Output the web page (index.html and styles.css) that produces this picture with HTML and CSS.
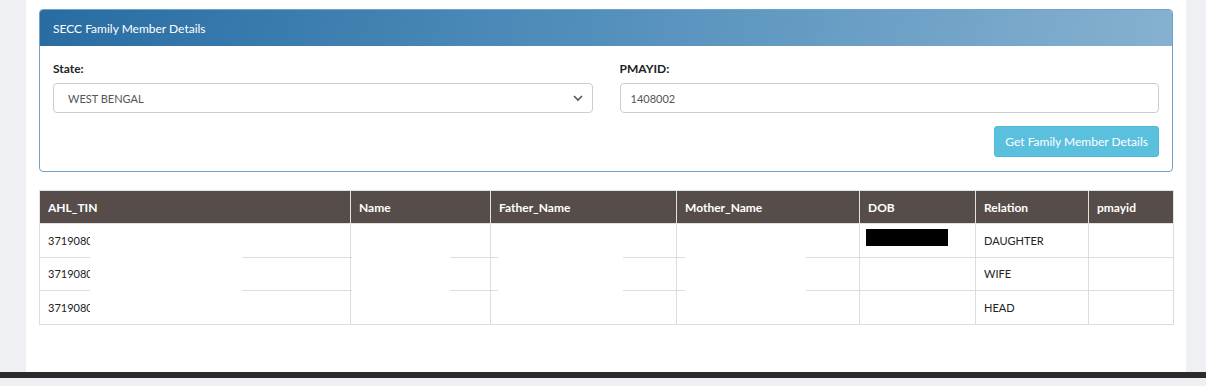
FILE: index.html
```html
<!DOCTYPE html>
<html lang="en">
<head>
    <meta charset="UTF-8">
    <meta name="viewport" content="width=device-width, initial-scale=1.0">
    <title>SECC Family Member Details</title>
    <link rel="stylesheet" href="styles.css">
</head>
<body>
    <div class="page">
        <div class="panel">
            <div class="panel-heading">SECC Family Member Details</div>
            <div class="panel-body">
                <div class="form-row">
                    <div class="form-group">
                        <label for="state">State:</label>
                        <select id="state" class="form-control">
                            <option>WEST BENGAL</option>
                        </select>
                    </div>
                    <div class="form-group">
                        <label for="pmayid">PMAYID:</label>
                        <input type="text" id="pmayid" class="form-control" value="1408002">
                    </div>
                </div>
                <div class="actions">
                    <button class="btn-info">Get Family Member Details</button>
                </div>
            </div>
        </div>

        <div class="table-wrap">
            <table class="members">
                <colgroup>
                    <col class="c-ahl">
                    <col class="c-name">
                    <col class="c-father">
                    <col class="c-mother">
                    <col class="c-dob">
                    <col class="c-rel">
                    <col class="c-id">
                </colgroup>
                <thead>
                    <tr>
                        <th>AHL_TIN</th>
                        <th>Name</th>
                        <th>Father_Name</th>
                        <th>Mother_Name</th>
                        <th>DOB</th>
                        <th>Relation</th>
                        <th>pmayid</th>
                    </tr>
                </thead>
                <tbody>
                    <tr>
                        <td>3719080</td>
                        <td></td>
                        <td></td>
                        <td></td>
                        <td><span class="blackout"></span></td>
                        <td>DAUGHTER</td>
                        <td></td>
                    </tr>
                    <tr>
                        <td>3719080</td>
                        <td></td>
                        <td></td>
                        <td></td>
                        <td></td>
                        <td>WIFE</td>
                        <td></td>
                    </tr>
                    <tr>
                        <td>3719080</td>
                        <td></td>
                        <td></td>
                        <td></td>
                        <td></td>
                        <td>HEAD</td>
                        <td></td>
                    </tr>
                </tbody>
            </table>
            <!-- redacted areas -->
            <div class="redact r1"></div>
            <div class="redact r2"></div>
            <div class="redact r3"></div>
            <div class="redact r4"></div>
        </div>
    </div>
    <div class="footer-bar"></div>
</body>
</html>
```

FILE: styles.css
```css
body {
    margin: 0;
    font-family: Lato, "Open Sans", Arial, sans-serif;
    font-size: 12px;
    color: #333;
    background-color: #eff0f4;
}
.page {
    margin: 0 20px 0 26px;
    padding: 9px 13px 0;
    height: 363px;
    background-color: #fff;
}
.panel {
    border: 1px solid #6fa3c9;
    border-radius: 4px;
    overflow: hidden;
}
.panel-heading {
    height: 36px;
    padding: 0 13px;
    display: flex;
    align-items: center;
    color: #fff;
    background: linear-gradient(100deg, #286ca2 0%, #4a89b8 40%, #86b1d0 100%);
}
.panel-body {
    padding: 16px 13px 14px;
}
.form-row {
    display: grid;
    grid-template-columns: 1fr 1fr;
    gap: 27px;
}
.form-group label {
    display: block;
    font-weight: bold;
    color: #222;
    line-height: 14px;
    margin-bottom: 7px;
}
.form-control {
    display: block;
    box-sizing: border-box;
    width: 100%;
    height: 30px;
    padding: 0 10px;
    font-family: inherit;
    font-size: 11px;
    color: #555;
    background-color: #fff;
    border: 1px solid #ccc;
    border-radius: 4px;
    outline: none;
}
select.form-control {
    padding-left: 14px;
    appearance: none;
    background-image: url("data:image/svg+xml,%3Csvg xmlns='http://www.w3.org/2000/svg' width='10' height='8' viewBox='0 0 10 8'%3E%3Cpath d='M1 2l4 4 4-4' fill='none' stroke='%23555' stroke-width='1.6'/%3E%3C/svg%3E");
    background-repeat: no-repeat;
    background-position: right 9px center;
}
.actions {
    display: flex;
    justify-content: flex-end;
    margin-top: 13px;
}
.btn-info {
    height: 31px;
    padding: 0 10px;
    font-family: inherit;
    font-size: 12px;
    color: #fff;
    background-color: #5bc0de;
    border: 1px solid #53b8d6;
    border-radius: 3px;
    cursor: pointer;
}
.table-wrap {
    position: relative;
    margin-top: 18px;
}
.members {
    width: 1134px;
    border-collapse: collapse;
    table-layout: fixed;
}
.members th, .members td {
    box-sizing: border-box;
    padding: 0 8px;
    text-align: left;
    border: 1px solid #ddd;
    white-space: nowrap;
    overflow: hidden;
}
.members th {
    height: 33px;
    color: #fff;
    font-weight: bold;
    background-color: #564d4a;
    border-color: #e2e2e2;
}
.members td {
    height: 33.5px;
    font-size: 11px;
    color: #222;
}
.c-ahl { width: 311px; }
.c-name { width: 140px; }
.c-father { width: 186px; }
.c-mother { width: 183px; }
.c-dob { width: 116px; }
.c-rel { width: 113px; }
.c-id { width: 85px; }
.blackout {
    display: block;
    width: 82px;
    height: 17px;
    margin: -5px 0 0 -2px;
    background-color: #000;
}
.redact {
    position: absolute;
    top: 34px;
    height: 98px;
    background-color: #fff;
}
.r1 { left: 51px; width: 152px; }
.r2 { left: 313px; width: 98px; }
.r3 { left: 459px; width: 125px; }
.r4 { left: 646px; width: 121px; }
.footer-bar {
    height: 6px;
    background-color: #2b2b2b;
}
```
